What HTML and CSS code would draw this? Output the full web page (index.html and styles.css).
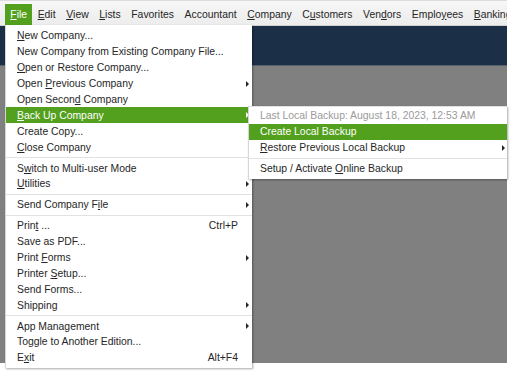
FILE: index.html
```html
<!DOCTYPE html>
<html lang="en">
<head>
<meta charset="utf-8">
<title>File menu</title>
<link rel="stylesheet" href="styles.css">
</head>
<body>
<div class="app">
  <nav class="menubar">
    <span class="mb-item active"><u>F</u>ile</span>
    <span class="mb-item"><u>E</u>dit</span>
    <span class="mb-item"><u>V</u>iew</span>
    <span class="mb-item"><u>L</u>ists</span>
    <span class="mb-item">Favorites</span>
    <span class="mb-item">Accountant</span>
    <span class="mb-item"><u>C</u>ompany</span>
    <span class="mb-item">C<u>u</u>stomers</span>
    <span class="mb-item">Ven<u>d</u>ors</span>
    <span class="mb-item">Emplo<u>y</u>ees</span>
    <span class="mb-item"><u>B</u>anking</span>
  </nav>
  <div class="workspace">
    <div class="band"></div>
    <div class="canvas"></div>
  </div>

  <div class="menu dropdown">
    <div class="row"><span class="label"><u>N</u>ew Company...</span></div>
    <div class="row"><span class="label">New Company from Existing Company File...</span></div>
    <div class="row"><span class="label"><u>O</u>pen or Restore Company...</span></div>
    <div class="row"><span class="label">Open <u>P</u>revious Company</span><span class="key"></span><span class="arrow"></span></div>
    <div class="row"><span class="label">Open Secon<u>d</u> Company</span></div>
    <div class="row hl"><span class="label"><u>B</u>ack Up Company</span><span class="key"></span><span class="arrow"></span></div>
    <div class="row"><span class="label">Create Copy...</span></div>
    <div class="row"><span class="label"><u>C</u>lose Company</span></div>
    <div class="sep"></div>
    <div class="row"><span class="label">S<u>w</u>itch to Multi-user Mode</span></div>
    <div class="row"><span class="label"><u>U</u>tilities</span><span class="key"></span><span class="arrow"></span></div>
    <div class="sep"></div>
    <div class="row"><span class="label">Send Company F<u>i</u>le</span><span class="key"></span><span class="arrow"></span></div>
    <div class="sep"></div>
    <div class="row"><span class="label">Prin<u>t</u> ...</span><span class="key">Ctrl+P</span></div>
    <div class="row"><span class="label">Save as PDF...</span></div>
    <div class="row"><span class="label">Print <u>F</u>orms</span><span class="key"></span><span class="arrow"></span></div>
    <div class="row"><span class="label">Printer <u>S</u>etup...</span></div>
    <div class="row"><span class="label">Send Forms...</span></div>
    <div class="row"><span class="label">Shippin<u>g</u></span><span class="key"></span><span class="arrow"></span></div>
    <div class="sep"></div>
    <div class="row"><span class="label">App Management</span><span class="key"></span><span class="arrow"></span></div>
    <div class="row"><span class="label">Toggle to Another Edition...</span></div>
    <div class="row"><span class="label">E<u>x</u>it</span><span class="key">Alt+F4</span></div>
  </div>

  <div class="menu submenu">
    <div class="row disabled"><span class="label">Last Local Backup: August 18, 2023, 12:53 AM</span></div>
    <div class="row hl"><span class="label">Create Local Backup</span></div>
    <div class="row"><span class="label"><u>R</u>estore Previous Local Backup</span><span class="key"></span><span class="arrow"></span></div>
    <div class="sep"></div>
    <div class="row"><span class="label">Setup / Activate <u>O</u>nline Backup</span></div>
  </div>
</div>
</body>
</html>
```

FILE: styles.css
```css
* { box-sizing: border-box; }

html, body {
  margin: 0;
  padding: 0;
  background: #ffffff;
}

body {
  width: 514px;
  height: 371px;
  overflow: hidden;
  font-family: "Liberation Sans", Arial, sans-serif;
  font-size: 10.4px;
  color: #262626;
}

u {
  text-decoration: underline;
  text-underline-offset: 1px;
}

.app {
  position: relative;
  width: 507px;
  height: 363px;
  display: flex;
  flex-direction: column;
}

/* ---------- menu bar ---------- */
.menubar {
  height: 26px;
  flex: none;
  display: flex;
  align-items: stretch;
  padding-top: 3px;
  padding-left: 5px;
  border-top: 1px solid #dcdcdc;
  border-bottom: 1px solid #cfcfcf;
  background: linear-gradient(#f7f7f7, #ececec);
  white-space: nowrap;
  overflow: hidden;
}

.mb-item {
  display: flex;
  align-items: center;
  padding: 0 5.3px;
  color: #262626;
}

.mb-item.active {
  background: #53a01e;
  color: #ffffff;
}

/* ---------- workspace ---------- */
.workspace {
  flex: 1;
  display: flex;
  flex-direction: column;
}

.band {
  height: 40px;
  flex: none;
  background: #1b2f47;
  border-bottom: 1px solid #56606b;
}

.canvas {
  flex: 1;
  background: #808080;
}

/* ---------- menus ---------- */
.menu {
  position: absolute;
  background: #ffffff;
  border-left: 1px solid #d6d6d6;
  box-shadow: 1px 1px 2px rgba(0, 0, 0, 0.35);
}

.dropdown {
  left: 5px;
  top: 25px;
  width: 247px;
  padding: 3px 0 2px;
}

.submenu {
  left: 248px;
  top: 106px;
  width: 259px;
  padding: 1px 0 2px;
  border-top: 1px solid #e2e2e2;
}

.row {
  height: 15.9px;
  display: grid;
  grid-template-columns: 1fr auto 11px;
  align-items: center;
  padding: 0 3px 0 11px;
  white-space: nowrap;
}

.submenu .row {
  padding-left: 11px;
  padding-right: 2px;
}

.row.hl {
  background: #53a01e;
  color: #ffffff;
}

.row.disabled {
  color: #9a9a9a;
}

.key {
  text-align: right;
}

.arrow {
  justify-self: end;
  width: 0;
  height: 0;
  border-left: 3px solid #262626;
  border-top: 3px solid transparent;
  border-bottom: 3px solid transparent;
}

.row.hl .arrow {
  border-left-color: #ffffff;
}

.sep {
  height: 5px;
  display: flex;
  align-items: center;
}

.sep::before {
  content: "";
  flex: 1;
  height: 1px;
  background: #e2e2e2;
}
```
